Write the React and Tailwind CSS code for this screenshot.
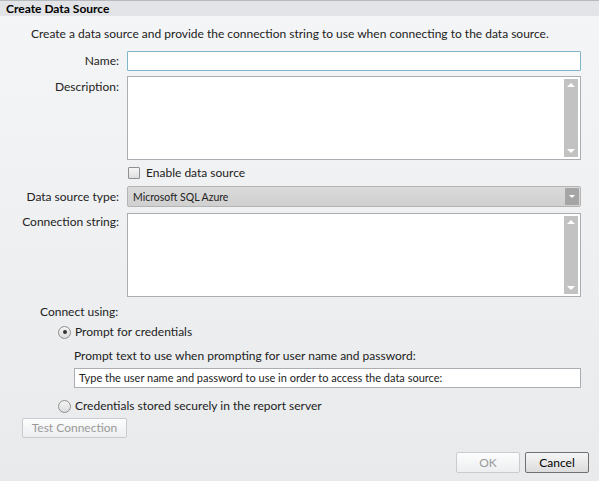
import React from 'react';

const font = { fontFamily: 'Lato, "Liberation Sans", sans-serif' };

const ScrollBox = ({ height }) => (
  <div className={`relative bg-white border border-[#abadb3] ${height}`}>
    <div className="absolute right-[2px] top-[2px] bottom-[2px] w-[14px] bg-[#c2c2c2] flex flex-col justify-between items-center py-[4px]">
      <div className="w-0 h-0 border-l-[4px] border-r-[4px] border-b-[4px] border-l-transparent border-r-transparent border-b-white" />
      <div className="w-0 h-0 border-l-[4px] border-r-[4px] border-t-[4px] border-l-transparent border-r-transparent border-t-white" />
    </div>
  </div>
);

const Radio = ({ checked }) => (
  <div className="w-[13px] h-[13px] rounded-full border border-[#8e8f8f] bg-gradient-to-b from-[#f4f4f4] to-[#dcdcdc] flex items-center justify-center">
    {checked && <div className="w-[4px] h-[4px] rounded-full bg-[#333]" />}
  </div>
);

export default function App() {
  return (
    <div className="w-[599px] h-[481px] overflow-hidden flex flex-col bg-[#eef0f2] text-[12px] leading-[16px] text-[#222]" style={font}>
      <div className="h-[16px] border-t border-[#b7bbc0] bg-[#e2e4e7] pl-[6px] flex items-center font-bold text-black leading-[14px]">
        Create Data Source
      </div>
      <div className="flex-1 flex flex-col bg-gradient-to-b from-[#f4f5f7] to-[#e8eaec] pr-[18px]">
        <div className="pl-[31px] mt-[10px] whitespace-nowrap">
          Create a data source and provide the connection string to use when connecting to the data source.
        </div>

        <div className="flex mt-[9px] items-center">
          <div className="w-[119px] text-right">Name:</div>
          <div className="ml-[8px] flex-1 h-[20px] bg-white border border-[#7fb4c9] rounded-[1px]" />
        </div>

        <div className="flex mt-[5px]">
          <div className="w-[119px] text-right pt-[3px]">Description:</div>
          <div className="ml-[8px] flex-1">
            <ScrollBox height="h-[84px]" />
          </div>
        </div>

        <div className="flex mt-[5px] items-center pl-[128px] gap-[6px]">
          <div className="w-[12px] h-[12px] border border-[#8e8f8f] bg-gradient-to-b from-[#f6f6f6] to-[#dedede] rounded-[1px]" />
          <span>Enable data source</span>
        </div>

        <div className="flex mt-[5px] items-center">
          <div className="w-[119px] text-right">Data source type:</div>
          <div className="ml-[8px] flex-1 h-[21px] rounded-[2px] border border-[#b4b4b4] bg-gradient-to-b from-[#dadada] to-[#d0d0d0] flex items-center justify-between pl-[5px] pr-[1px]">
            <span className="text-[10.5px]">Microsoft SQL Azure</span>
            <div className="w-[14px] h-[17px] bg-[#a5a5a5] rounded-[1px] flex items-center justify-center">
              <div className="w-0 h-0 border-l-[3px] border-r-[3px] border-t-[3px] border-l-transparent border-r-transparent border-t-white" />
            </div>
          </div>
        </div>

        <div className="flex mt-[6px]">
          <div className="w-[119px] text-right pt-[1px]">Connection string:</div>
          <div className="ml-[8px] flex-1">
            <ScrollBox height="h-[84px]" />
          </div>
        </div>

        <div className="pl-[40px] mt-[7px]">Connect using:</div>

        <div className="flex items-center gap-[4px] pl-[58px] mt-[4px]">
          <Radio checked />
          <span>Prompt for credentials</span>
        </div>

        <div className="pl-[74px] mt-[8px]">
          Prompt text to use when prompting for user name and password:
        </div>

        <div className="ml-[74px] mt-[4px] h-[20px] bg-white border border-[#abadb3] flex items-center pl-[4px] text-[11px]">
          Type the user name and password to use in order to access the data source:
        </div>

        <div className="flex items-center gap-[4px] pl-[58px] mt-[10px]">
          <Radio />
          <span>Credentials stored securely in the report server</span>
        </div>

        <div className="pl-[22px] mt-[4px]">
          <div className="w-[105px] h-[20px] rounded-[2px] border border-[#c9cbce] bg-gradient-to-b from-[#fdfdfd] to-[#eceef0] flex items-center justify-center text-[#9a9a9a]">
            Test Connection
          </div>
        </div>

        <div className="flex justify-end gap-[5px] mt-[14px] -mr-[8px]">
          <div className="w-[64px] h-[21px] rounded-[2px] border border-[#c9cbce] bg-gradient-to-b from-[#fdfdfd] to-[#eceef0] flex items-center justify-center text-[#9a9a9a]">
            OK
          </div>
          <div className="w-[64px] h-[21px] rounded-[2px] border border-[#707070] bg-gradient-to-b from-[#f6f6f6] to-[#dcdcdc] flex items-center justify-center text-black">
            Cancel
          </div>
        </div>
      </div>
    </div>
  );
}
